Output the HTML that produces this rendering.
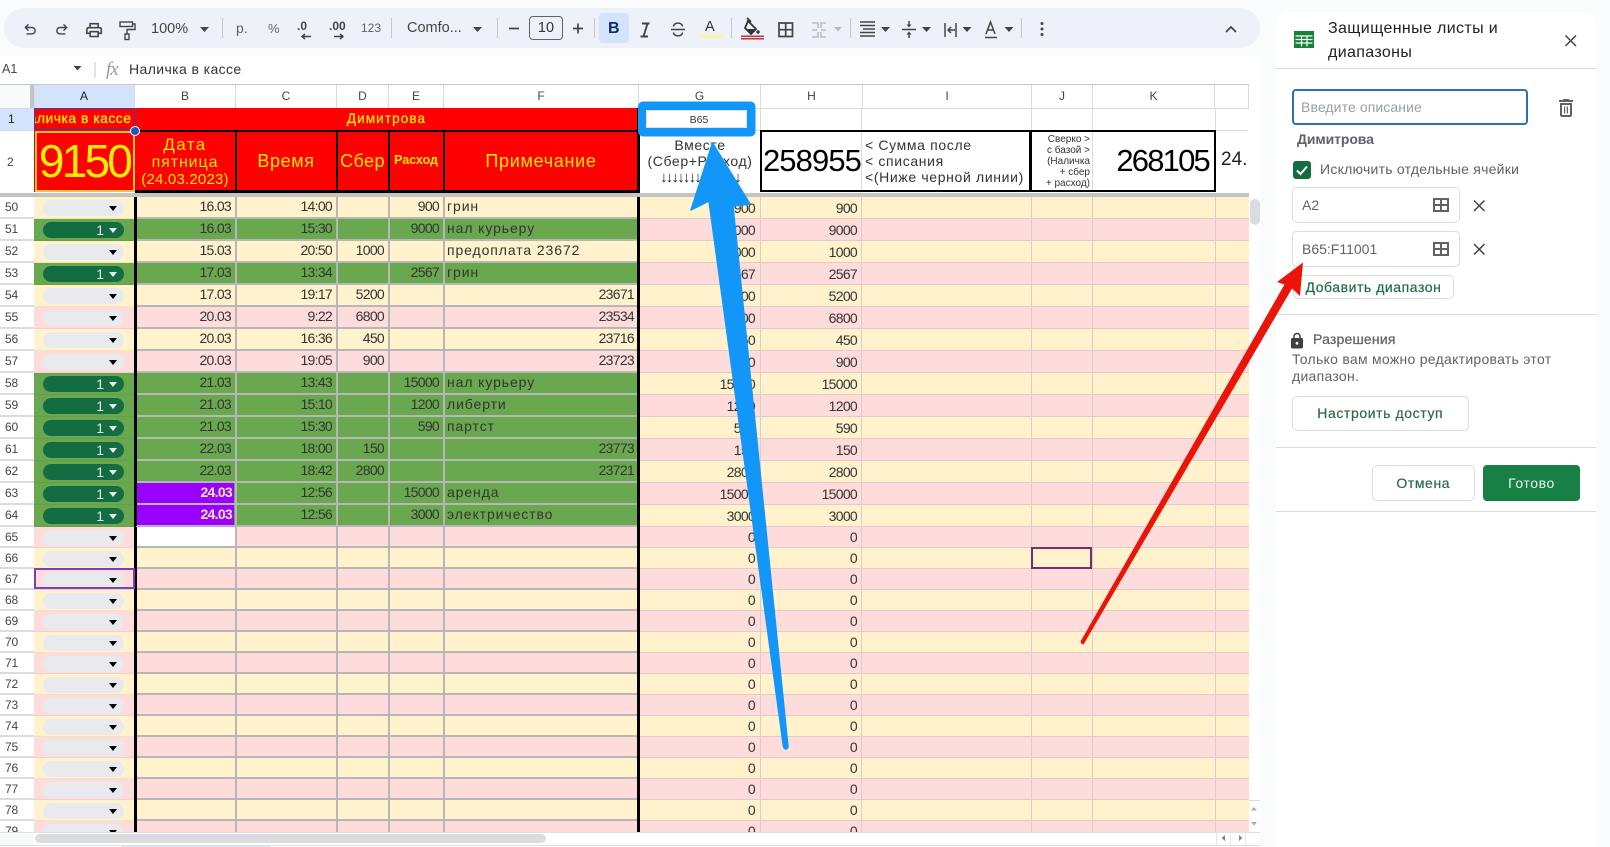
<!DOCTYPE html>
<html lang="ru"><head><meta charset="utf-8"><title>Защищенные листы</title>
<style>
html,body{margin:0;padding:0;width:1610px;height:847px;overflow:hidden;background:#f9fbfd;font-family:"Liberation Sans","DejaVu Sans",sans-serif;color:#333}
.t{position:absolute;white-space:nowrap}
.b{position:absolute}
#grid{position:absolute;left:0;top:197px;width:1248.5px;height:635px;overflow:hidden;background:#fff}
.r{position:relative;display:grid;grid-template-columns:34px 101px 100px 101px 52px 55px 195px 121px 102px;height:21.97px;line-height:19px;font-size:14px;letter-spacing:-.7px;color:#333}
.r.s{height:21px;line-height:19px}
.r>a{display:block;overflow:hidden;text-align:right;padding-right:4px;white-space:nowrap;position:relative;z-index:1}
.r>a:nth-child(1){background:#fff;text-align:left;padding:0 0 0 5px;font-size:12px;line-height:21px;color:#444;letter-spacing:-.2px}
.r.s>a:nth-child(1){line-height:20px}
.r>a:nth-child(n+8){line-height:22px;padding-right:4px}
.r.s>a:nth-child(n+8){line-height:20px}
.r>a.l{text-align:left;padding:0 0 0 4px;letter-spacing:.9px;font-size:14px}
.r>a.v{background:#9900ff;color:#fce5cd;font-weight:bold;margin:0 1px 0 2px;padding-right:2px;height:21px}
.r>a.w{background:#fff;margin:0 0 0 2px;height:20px}
.y{background:#fff2cc}.n{background:#ffdcdc}
.g{background:linear-gradient(90deg,#6aa84f 638px,transparent 638px),#fff2cc}
.g.n{background:linear-gradient(90deg,#6aa84f 638px,transparent 638px),#ffdcdc}
.r::after{content:"";position:absolute;left:0;right:0;bottom:0;height:2px;z-index:2;background:linear-gradient(90deg,#dadce0 34px,transparent 34px,transparent 136px,#b7b7b7 136px,#b7b7b7 637px,transparent 637px)}
.r::before{content:"";position:absolute;left:34px;right:0;bottom:0;height:1px;z-index:2;background:linear-gradient(90deg,rgba(0,0,0,.06) 100px,transparent 100px,transparent 606px,#e3c9c9 606px)}
.p{position:absolute;left:9px;top:3px;width:81px;height:16px;border-radius:8px;background:#e8eaed;display:block;font-style:normal}
.p::after{content:"";position:absolute;right:7px;top:6px;border:4px solid transparent;border-bottom:0;border-top:5px solid #000}
.g .p{background:#146c43;color:#dfeee6;font-size:14px;line-height:16px;text-align:right;padding-right:0}
.g .p span{position:absolute;right:20px;top:0;letter-spacing:0}
.g .p::after{border-top-color:#e6f2ea}
.vl{position:absolute;top:197px;height:635px;z-index:3}
.hc{position:absolute;top:85px;height:23px;line-height:23px;text-align:center;font-size:12px;color:#444;border-right:1px solid #dadce0;box-sizing:border-box}
.gl{position:absolute;background:#e0e0e0}
.bk{position:absolute;background:#000}
.hd{color:#ffe800;text-align:center;position:absolute;white-space:nowrap}
.sb{position:absolute;border:1px solid #dadce0;border-radius:5px;box-sizing:border-box;background:#fff}
</style></head>
<body>
<!-- toolbar -->
<div class="b" style="left:4px;top:8px;width:1256px;height:40px;border-radius:20px;background:#edf2fa"></div>
<div class="b" style="left:0;top:56px;width:1260px;height:791px;background:#fff"></div>
<div class="b" style="left:599px;top:13px;width:30px;height:30px;border-radius:4px;background:#d3e3fd"></div>
<div class="t" style="left:151px;top:21px;font-size:14.5px;color:#444;line-height:17px">100%</div>
<div class="t" style="left:236px;top:20px;font-size:14px;color:#5f6368;line-height:17px">р.</div>
<div class="t" style="left:268px;top:20px;font-size:13px;color:#5f6368;line-height:17px">%</div>
<div class="t" style="left:297px;top:19px;font-size:12px;font-weight:bold;color:#444;line-height:15px">.0</div>
<div class="t" style="left:329px;top:19px;font-size:12px;font-weight:bold;color:#444;line-height:15px">.00</div>
<div class="t" style="left:361px;top:21px;font-size:12px;color:#5f6368;line-height:15px">123</div>
<div class="t" style="left:407px;top:20px;font-size:14.5px;color:#444;line-height:17px">Comfo...</div>
<div class="b" style="left:529px;top:16px;width:34px;height:24px;border:1px solid #5f6368;border-radius:4px;box-sizing:border-box;text-align:center;line-height:22px;font-size:14.5px;color:#333">10</div>
<div class="t" style="left:608px;top:19px;font-size:16px;font-weight:bold;color:#0b2f66;line-height:20px">B</div>
<div class="t" style="left:705px;top:19px;font-size:14.5px;color:#333;line-height:16px">A</div>
<svg class="b" style="left:0;top:0" width="1260" height="56" viewBox="0 0 1260 56" fill="#444">
<g fill="#c7c7c7"><rect x="222" y="18" width="1" height="20"/><rect x="391" y="18" width="1" height="20"/><rect x="497" y="18" width="1" height="20"/><rect x="594" y="18" width="1" height="20"/><rect x="731" y="18" width="1" height="20"/><rect x="850" y="18" width="1" height="20"/><rect x="1021" y="18" width="1" height="20"/></g>
<path transform="translate(21.5 21) scale(.72)" d="M7 19v-2h7.1q1.575 0 2.738-1T18 13.5q0-1.5-1.162-2.5T14.1 10H7.8l2.6 2.6L9 14 4 9l5-5 1.4 1.4L7.8 8h6.3q2.425 0 4.163 1.575T20 13.5q0 2.35-1.738 3.925T14.1 19Z"/>
<path transform="translate(70.5 21) scale(-.72 .72)" d="M7 19v-2h7.1q1.575 0 2.738-1T18 13.5q0-1.5-1.162-2.5T14.1 10H7.8l2.6 2.6L9 14 4 9l5-5 1.4 1.4L7.8 8h6.3q2.425 0 4.163 1.575T20 13.5q0 2.35-1.738 3.925T14.1 19Z"/>
<path transform="translate(84.5 20.5) scale(.8)" d="M19 8h-1V3H6v5H5c-1.66 0-3 1.34-3 3v6h4v4h12v-4h4v-6c0-1.66-1.34-3-3-3zM8 5h8v3H8V5zm8 12v2H8v-4h8v2zm2-2v-2H6v2H4v-4c0-.55.45-1 1-1h14c.55 0 1 .45 1 1v4h-2z"/>
<g fill="none" stroke="#444" stroke-width="1.4"><rect x="120" y="22" width="12.500" height="4.500"/><path d="M132.500 24h2.500v5.500h-8v4.500"/><rect x="125" y="34" width="4" height="5.500"/></g>
<path d="M200 27h9l-4.500 5zM473 27h9l-4.500 5z" fill="#444"/>
<path d="M302 36.500h9M305 34l-3 2.500 3 2.500M334 36.500h9M340 34l3 2.500-3 2.500" fill="none" stroke="#444" stroke-width="1.500"/>
<path d="M509 28.500h10M573 28.500h10M578 23.500v10" stroke="#444" stroke-width="1.700"/>
<path d="M642 23.500h7.500M640.500 36.500h7.500M647.500 23.500l-4 13" stroke="#444" stroke-width="1.900" fill="none"/>
<path d="M671 29.500h14M673.500 26.500c0-4.500 9-4.500 9 0M673.500 32.500c0 4.500 9 4.500 9 0" stroke="#444" stroke-width="1.500" fill="none"/>
<rect x="700" y="35" width="23" height="3" fill="#fff59d"/>
<path d="M748 21l8 8-5 5-6-6zM747 18l4 4" fill="none" stroke="#333" stroke-width="1.800"/><path d="M747 29h9l-4.500 4.500z" fill="#333"/><circle cx="758" cy="32" r="1.700" fill="#333"/>
<rect x="741" y="35.500" width="23" height="1.500" fill="#c5323a"/><rect x="741" y="38" width="23" height="1.500" fill="#c5323a"/>
<path d="M779 23h13.500v13.500H779zM785.700 23v13.500M779 29.700h13.500" fill="none" stroke="#444" stroke-width="1.700"/>
<path d="M812 23h6v5M826 23h-5v5M812 37h6v-5M826 37h-5v-5M812 30h5M826 30h-5" fill="none" stroke="#b9bcc0" stroke-width="1.600"/>
<path d="M834 27h8l-4 4.500z" fill="#bbb"/>
<path d="M860 22h15M860 25.500h15M863 29h12M860 32.500h15M860 36h15" stroke="#444" stroke-width="1.500"/>
<path d="M881 27h9l-4.500 5zM922 27h9l-4.500 5zM962.500 27h9l-4.500 5zM1004.500 27h9l-4.500 5z" fill="#444"/>
<path d="M902 29.500h14M909 21v5M909 38v-5" stroke="#444" stroke-width="1.500"/><path d="M906.500 24.500L909 27.500l2.500-3zM906.500 34.500L909 31.500l2.500 3z" fill="#444"/>
<path d="M945 23v14M956 23v14M948 30h7M951 27l-3 3 3 3" fill="none" stroke="#444" stroke-width="1.500"/>
<path d="M986 34l4.500-12 4.500 12M987.500 30h6M985 37.500h12" fill="none" stroke="#444" stroke-width="1.500"/>
<circle cx="1042" cy="23.500" r="1.500"/><circle cx="1042" cy="29" r="1.500"/><circle cx="1042" cy="34.500" r="1.500"/>
<path d="M1226 32l5-5 5 5" fill="none" stroke="#444" stroke-width="1.700"/>
</svg>
<!-- formula bar -->
<div class="t" style="left:2px;top:62px;font-size:12.500px;color:#444;line-height:15px">A1</div>
<svg class="b" style="left:70px;top:60px" width="60" height="20"><path d="M3.500 6h8l-4 4.500z" fill="#444"/><rect x="24.500" y="2" width="1" height="16" fill="#c7c7c7"/></svg>
<div class="t" style="left:106px;top:59px;font:italic 19px/21px 'Liberation Serif',serif;color:#999;letter-spacing:-1px">fx</div>
<div class="t" style="left:129px;top:61px;font-size:14px;letter-spacing:.4px;color:#333;line-height:17px">Наличка в кассе</div>
<!-- column headers -->
<div class="b" style="left:0;top:84px;width:1248.500px;height:1px;background:#c4c7c5"></div>
<div class="b" style="left:0;top:85px;width:30px;height:23px;background:#f8f9fa"></div>
<div class="b" style="left:30px;top:85px;width:4px;height:23px;background:#c4c4c4"></div>
<div class="hc" style="left:34px;width:101px;background:#d3e3fd;color:#222">A</div>
<div class="hc" style="left:135px;width:101px">B</div>
<div class="hc" style="left:236px;width:101px">C</div>
<div class="hc" style="left:337px;width:52px">D</div>
<div class="hc" style="left:389px;width:55px">E</div>
<div class="hc" style="left:444px;width:195px">F</div>
<div class="hc" style="left:639px;width:122px">G</div>
<div class="hc" style="left:761px;width:102px">H</div>
<div class="hc" style="left:863px;width:169px">I</div>
<div class="hc" style="left:1032px;width:61px">J</div>
<div class="hc" style="left:1093px;width:122px">K</div>
<div class="hc" style="left:1215px;width:34px"></div>
<!-- row headers 1,2 -->
<div class="b" style="left:0;top:108px;width:1248.500px;height:1px;background:#dadce0"></div>
<div class="b" style="left:0;top:109px;width:34px;height:21px;background:#d3e3fd;text-align:left;padding-left:8px;box-sizing:border-box;font-size:12px;line-height:21px;color:#222">1</div>
<div class="b" style="left:0;top:130px;width:34px;height:62px;text-align:left;padding-left:7px;box-sizing:border-box;font-size:12px;line-height:62px;color:#444;border-top:1px solid #dadce0">2</div>
<div class="gl" style="left:34px;top:85px;width:1px;height:107px;background:#dadce0"></div>
<!-- right empties row 1/2 gridlines -->
<div class="gl" style="left:639px;top:130px;width:121px;height:1px;background:#dadce0"></div>
<div class="gl" style="left:760px;top:108px;width:1px;height:84px;background:#dadce0"></div>
<div class="gl" style="left:861px;top:108px;width:1px;height:84px;background:#dadce0"></div>
<div class="gl" style="left:1031px;top:108px;width:1px;height:84px;background:#dadce0"></div>
<div class="gl" style="left:1092px;top:108px;width:1px;height:84px;background:#dadce0"></div>
<div class="gl" style="left:1215px;top:108px;width:1px;height:84px;background:#dadce0"></div>
<div class="gl" style="left:760px;top:130px;width:488px;height:1px;background:#dadce0"></div>
<!-- red header -->
<div class="b" style="left:34px;top:108px;width:605px;height:84px;background:#f00"></div>
<div class="bk" style="left:135px;top:129.500px;width:503px;height:2.500px"></div>
<div class="bk" style="left:135px;top:190px;width:503px;height:2.500px"></div>
<div class="bk" style="left:234.500px;top:130px;width:2.500px;height:62px"></div>
<div class="bk" style="left:335.500px;top:130px;width:2.500px;height:62px"></div>
<div class="bk" style="left:387.500px;top:130px;width:2.500px;height:62px"></div>
<div class="bk" style="left:442.500px;top:130px;width:2.500px;height:62px"></div>
<div class="bk" style="left:637px;top:108px;width:2.500px;height:85px"></div>
<div class="b" style="left:34.500px;top:131px;width:100px;height:61px;box-sizing:border-box;border:2px solid #f6c838"></div>
<div class="b" style="left:34px;top:108px;width:101px;height:22px;overflow:hidden"><div class="hd" style="right:3.500px;top:0;font-size:14px;letter-spacing:.45px;line-height:21px;-webkit-text-stroke:.3px #ffe800">Наличка в кассе</div></div>
<div class="b" style="left:34px;top:108px;width:101px;height:22px;box-sizing:border-box;border:1.500px solid #3d3fb0"></div>
<div class="hd" style="left:135px;top:108px;width:503px;line-height:21px;font-size:13.500px;letter-spacing:1.100px;-webkit-text-stroke:.25px #ffe800">Димитрова</div>
<div class="hd" style="left:34px;top:131px;width:101px;line-height:60px;font-size:46px;letter-spacing:-2.800px;color:#ffee00">9150</div>
<div class="hd" style="left:135px;top:136px;width:100px;line-height:17px;font-size:15px;letter-spacing:.2px"><span style="font-size:17px;letter-spacing:1.400px">Дата</span><br><span style="font-size:16px;letter-spacing:.9px">пятница</span><br>(24.03.2023)</div>
<div class="hd" style="left:236px;top:132px;width:100px;line-height:58px;font-size:18px;letter-spacing:.6px">Время</div>
<div class="hd" style="left:337px;top:132px;width:51px;line-height:58px;font-size:18px;letter-spacing:.4px">Сбер</div>
<div class="hd" style="left:389px;top:132px;width:54px;line-height:56px;font-size:12.500px;font-weight:bold">Расход</div>
<div class="hd" style="left:444px;top:132px;width:194px;line-height:58px;font-size:18px;letter-spacing:.7px">Примечание</div>
<!-- G2.. -->
<div class="t" style="left:640px;top:137px;width:120px;text-align:center;font-size:14px;line-height:16px;letter-spacing:.6px;color:#333">Вместе<br>(Сбер+Расход)<br><span style="letter-spacing:-1.800px;font-size:15px;color:#222">↓↓↓↓↓↓↓↓↓↓↓↓↓↓</span></div>
<div class="b" style="left:760px;top:130px;width:456px;height:62px;box-sizing:border-box;border:2.500px solid #000"></div>
<div class="bk" style="left:1029px;top:130px;width:3px;height:62px"></div>
<div class="t" style="left:762px;top:131px;width:100px;text-align:center;font-size:31px;line-height:60px;letter-spacing:-.9px;color:#000">258955</div>
<div class="t" style="left:865px;top:137px;font-size:14px;line-height:16px;letter-spacing:.65px;color:#333">&lt; Сумма после<br>&lt; списания<br>&lt;(Ниже черной линии)</div>
<div class="t" style="left:1032px;top:134px;width:58px;text-align:right;font-size:10px;line-height:11px;color:#333">Сверко &gt;<br>с базой &gt;<br>(Наличка<br>+ сбер<br>+ расход)</div>
<div class="t" style="left:1100px;top:131px;width:109px;text-align:right;font-size:31px;line-height:60px;letter-spacing:-1.800px;color:#000">268105</div>
<div class="b" style="left:1218px;top:130px;width:30px;height:60px;overflow:hidden;font-size:19px;line-height:60px;color:#222;padding-left:3px;box-sizing:border-box">24.0</div>
<div class="b" style="left:0;top:192.500px;width:1248.500px;height:4.500px;background:#c4c4c4"></div>
<!-- data rows -->
<div id="grid">
<div class="r y"><a>50</a><a><i class="p"></i></a><a>16.03</a><a>14:00</a><a></a><a>900</a><a class="l">грин</a><a>900</a><a>900</a></div>
<div class="r g n"><a>51</a><a><i class="p"><span>1</span></i></a><a>16.03</a><a>15:30</a><a></a><a>9000</a><a class="l">нал курьеру</a><a>9000</a><a>9000</a></div>
<div class="r y"><a>52</a><a><i class="p"></i></a><a>15.03</a><a>20:50</a><a>1000</a><a></a><a class="l">предоплата 23672</a><a>1000</a><a>1000</a></div>
<div class="r g n"><a>53</a><a><i class="p"><span>1</span></i></a><a>17.03</a><a>13:34</a><a></a><a>2567</a><a class="l">грин</a><a>2567</a><a>2567</a></div>
<div class="r y"><a>54</a><a><i class="p"></i></a><a>17.03</a><a>19:17</a><a>5200</a><a></a><a>23671</a><a>5200</a><a>5200</a></div>
<div class="r n"><a>55</a><a><i class="p"></i></a><a>20.03</a><a>9:22</a><a>6800</a><a></a><a>23534</a><a>6800</a><a>6800</a></div>
<div class="r y"><a>56</a><a><i class="p"></i></a><a>20.03</a><a>16:36</a><a>450</a><a></a><a>23716</a><a>450</a><a>450</a></div>
<div class="r n"><a>57</a><a><i class="p"></i></a><a>20.03</a><a>19:05</a><a>900</a><a></a><a>23723</a><a>900</a><a>900</a></div>
<div class="r g"><a>58</a><a><i class="p"><span>1</span></i></a><a>21.03</a><a>13:43</a><a></a><a>15000</a><a class="l">нал курьеру</a><a>15000</a><a>15000</a></div>
<div class="r g n"><a>59</a><a><i class="p"><span>1</span></i></a><a>21.03</a><a>15:10</a><a></a><a>1200</a><a class="l">либерти</a><a>1200</a><a>1200</a></div>
<div class="r g"><a>60</a><a><i class="p"><span>1</span></i></a><a>21.03</a><a>15:30</a><a></a><a>590</a><a class="l">партст</a><a>590</a><a>590</a></div>
<div class="r g n"><a>61</a><a><i class="p"><span>1</span></i></a><a>22.03</a><a>18:00</a><a>150</a><a></a><a>23773</a><a>150</a><a>150</a></div>
<div class="r g"><a>62</a><a><i class="p"><span>1</span></i></a><a>22.03</a><a>18:42</a><a>2800</a><a></a><a>23721</a><a>2800</a><a>2800</a></div>
<div class="r g n"><a>63</a><a><i class="p"><span>1</span></i></a><a class="v">24.03</a><a>12:56</a><a></a><a>15000</a><a class="l">аренда</a><a>15000</a><a>15000</a></div>
<div class="r g"><a>64</a><a><i class="p"><span>1</span></i></a><a class="v">24.03</a><a>12:56</a><a></a><a>3000</a><a class="l">электричество</a><a>3000</a><a>3000</a></div>
<div class="r s n"><a>65</a><a><i class="p"></i></a><a class="w"></a><a></a><a></a><a></a><a></a><a>0</a><a>0</a></div>
<div class="r s y"><a>66</a><a><i class="p"></i></a><a></a><a></a><a></a><a></a><a></a><a>0</a><a>0</a></div>
<div class="r s n"><a>67</a><a><i class="p"></i></a><a></a><a></a><a></a><a></a><a></a><a>0</a><a>0</a></div>
<div class="r s y"><a>68</a><a><i class="p"></i></a><a></a><a></a><a></a><a></a><a></a><a>0</a><a>0</a></div>
<div class="r s n"><a>69</a><a><i class="p"></i></a><a></a><a></a><a></a><a></a><a></a><a>0</a><a>0</a></div>
<div class="r s y"><a>70</a><a><i class="p"></i></a><a></a><a></a><a></a><a></a><a></a><a>0</a><a>0</a></div>
<div class="r s n"><a>71</a><a><i class="p"></i></a><a></a><a></a><a></a><a></a><a></a><a>0</a><a>0</a></div>
<div class="r s y"><a>72</a><a><i class="p"></i></a><a></a><a></a><a></a><a></a><a></a><a>0</a><a>0</a></div>
<div class="r s n"><a>73</a><a><i class="p"></i></a><a></a><a></a><a></a><a></a><a></a><a>0</a><a>0</a></div>
<div class="r s y"><a>74</a><a><i class="p"></i></a><a></a><a></a><a></a><a></a><a></a><a>0</a><a>0</a></div>
<div class="r s n"><a>75</a><a><i class="p"></i></a><a></a><a></a><a></a><a></a><a></a><a>0</a><a>0</a></div>
<div class="r s y"><a>76</a><a><i class="p"></i></a><a></a><a></a><a></a><a></a><a></a><a>0</a><a>0</a></div>
<div class="r s n"><a>77</a><a><i class="p"></i></a><a></a><a></a><a></a><a></a><a></a><a>0</a><a>0</a></div>
<div class="r s y"><a>78</a><a><i class="p"></i></a><a></a><a></a><a></a><a></a><a></a><a>0</a><a>0</a></div>
<div class="r s n"><a>79</a><a><i class="p"></i></a><a></a><a></a><a></a><a></a><a></a><a>0</a><a>0</a></div>
</div>
<!-- vertical gridlines -->
<div class="vl" style="left:235px;width:2px;background:#b7b7b7"></div>
<div class="vl" style="left:336px;width:2px;background:#b7b7b7"></div>
<div class="vl" style="left:388px;width:2px;background:#b7b7b7"></div>
<div class="vl" style="left:443px;width:2px;background:#b7b7b7"></div>
<div class="vl" style="left:760px;width:1px;background:#e3c9c9"></div>
<div class="vl" style="left:861px;width:1px;background:#e3c9c9"></div>
<div class="vl" style="left:1031px;width:1px;background:#e3c9c9"></div>
<div class="vl" style="left:1092px;width:1px;background:#e3c9c9"></div>
<div class="vl" style="left:1215px;width:1px;background:#e3c9c9"></div>
<div class="vl" style="left:133.500px;width:3px;background:#000"></div>
<div class="vl" style="left:637px;width:3px;background:#000"></div>
<div class="b" style="left:136px;top:526px;width:98px;height:1px;background:#c59ae0;z-index:4"></div>
<div class="b" style="left:34px;top:568px;width:100.500px;height:21px;box-sizing:border-box;border:2px solid #7b3fb8;z-index:4"></div>
<div class="b" style="left:1031px;top:547px;width:61px;height:21.500px;box-sizing:border-box;border:2px solid #7b2a6e;z-index:4"></div>
<!-- selection handle -->
<div class="b" style="left:129.500px;top:125.500px;width:10px;height:10px;border-radius:50%;background:#1a56c4;border:1px solid #fff;box-sizing:border-box;z-index:4"></div>
<!-- scrollbars -->
<div class="b" style="left:1250px;top:199px;width:9.500px;height:26px;border-radius:5px;background:#dadce0"></div>
<div class="b" style="left:1248.500px;top:800px;width:11.500px;height:32px;border-top:1px solid #e0e0e0;box-sizing:border-box"></div>
<svg class="b" style="left:1248px;top:800px" width="12" height="34"><path d="M3 10.500l3-3.500 3 3.500zM3 22l3 3.500 3-3.500z" fill="#aaa"/></svg>
<div class="b" style="left:0;top:832px;width:1260px;height:1px;background:#e0e0e0"></div>
<div class="b" style="left:0;top:833px;width:34px;height:12px;background:#f8f9fa"></div>
<div class="b" style="left:35px;top:834px;width:511px;height:9px;border-radius:5px;background:#dadce0"></div>
<svg class="b" style="left:1215px;top:832px" width="45" height="13"><path d="M10 3l-3.500 3 3.500 3zM24 3l3.500 3-3.500 3z" fill="#888"/><path d="M1.500 0v13M15.500 0v13M30.500 0v13" stroke="#e6e6e6"/></svg>
<div class="b" style="left:0;top:845px;width:1260px;height:1px;background:#dadce0"></div>
<div class="b" style="left:122px;top:846px;width:148px;height:1px;background:#dbe7f7"></div>
<!-- sidebar -->
<div class="b" style="left:1276px;top:12px;width:320px;height:835px;background:#fff;border-radius:12px 12px 0 0"></div>
<svg class="b" style="left:1294px;top:31px" width="20" height="17"><rect width="20" height="17" fill="#188038"/><path d="M1.500 5h17M1.500 8.500h17M1.500 12h17M7.500 5v10.500M13 5v10.500" stroke="#fff" stroke-width="1.200"/><rect x="1.500" y="2" width="17" height="1" fill="#188038"/></svg>
<div class="t" style="left:1328px;top:16.500px;font-size:16px;line-height:24px;letter-spacing:.36px;color:#202124">Защищенные листы и<br>диапазоны</div>
<svg class="b" style="left:1563px;top:34px" width="16" height="14"><path d="M2.500 1.500l10.500 10.500M13 1.500L2.500 12" stroke="#444" stroke-width="1.500"/></svg>
<div class="b" style="left:1276px;top:68px;width:320px;height:1px;background:#dadce0"></div>
<div class="b" style="left:1292px;top:89px;width:235.500px;height:35.500px;box-sizing:border-box;border:2px solid #2f6fb5;border-radius:4px"></div>
<div class="t" style="left:1301px;top:99px;font-size:14px;line-height:16px;letter-spacing:.1px;color:#9aa0a6">Введите описание</div>
<svg class="b" style="left:1554px;top:96px" width="24" height="24" viewBox="0 0 24 24" fill="#5f6368"><path d="M6 19c0 1.100.9 2 2 2h8c1.100 0 2-.9 2-2V7H6v12zM8 9h8v10H8V9zm7.500-5l-1-1h-5l-1 1H5v2h14V4z"/><path d="M10 10.500h1.200v7H10zM12.800 10.500H14v7h-1.200z"/></svg>
<div class="t" style="left:1297px;top:131px;font-size:14px;line-height:17px;font-weight:bold;letter-spacing:-.1px;color:#5f6368">Димитрова</div>
<div class="b" style="left:1293px;top:161px;width:18px;height:18px;border-radius:3px;background:#146c43"></div>
<svg class="b" style="left:1293px;top:161px" width="18" height="18"><path d="M4 9.500l3.500 3.500L14 5.500" fill="none" stroke="#fff" stroke-width="2"/></svg>
<div class="t" style="left:1320px;top:161px;font-size:14px;line-height:17px;letter-spacing:.25px;color:#5f6368">Исключить отдельные ячейки</div>
<div class="sb" style="left:1292px;top:187px;width:167.500px;height:35.500px"></div>
<div class="t" style="left:1302px;top:196.500px;font-size:14px;line-height:17px;color:#5f6368">A2</div>
<div class="sb" style="left:1292px;top:231px;width:167.500px;height:35.500px"></div>
<div class="t" style="left:1302px;top:241px;font-size:14px;line-height:17px;color:#5f6368">B65:F11001</div>
<svg class="b" style="left:1432px;top:197px" width="60" height="62" fill="none" stroke="#5f6368" stroke-width="2"><path d="M2 2h14v12H2zM9 2v12M2 8h14M2 46h14v12H2zM9 46v12M2 52h14"/><path d="M42 3.500l10.500 10.500M52.500 3.500L42 14M42 47l10.500 10.500M52.500 47L42 57.500" stroke="#444" stroke-width="1.500"/></svg>
<div class="sb" style="left:1293px;top:275px;width:161px;height:24px;text-align:left;padding-left:11.500px;font-size:14px;line-height:22px;letter-spacing:.55px;color:#1e6b3f;-webkit-text-stroke:.2px #1e6b3f">Добавить диапазон</div>
<div class="b" style="left:1276px;top:314px;width:320px;height:1px;background:#dadce0"></div>
<svg class="b" style="left:1288px;top:332px" width="18" height="18" viewBox="0 0 24 24" fill="#3c4043"><path d="M18 8h-1V6c0-2.760-2.240-5-5-5S7 3.240 7 6v2H6c-1.100 0-2 .9-2 2v10c0 1.100.9 2 2 2h12c1.100 0 2-.9 2-2V10c0-1.100-.9-2-2-2zm-6 9c-1.100 0-2-.9-2-2s.9-2 2-2 2 .9 2 2-.9 2-2 2zM9 8V6c0-1.660 1.340-3 3-3s3 1.340 3 3v2H9z"/></svg>
<div class="t" style="left:1313px;top:331px;font-size:14px;line-height:17px;letter-spacing:.2px;color:#5f6368;-webkit-text-stroke:.25px #5f6368">Разрешения</div>
<div class="t" style="left:1292px;top:351px;font-size:14px;line-height:17px;letter-spacing:.28px;color:#5f6368">Только вам можно редактировать этот<br>диапазон.</div>
<div class="sb" style="left:1292px;top:395.500px;width:176.500px;height:35.500px;text-align:center;line-height:33px;font-size:14px;letter-spacing:.6px;color:#2d6a4a;-webkit-text-stroke:.2px #2d6a4a">Настроить доступ</div>
<div class="b" style="left:1276px;top:446.500px;width:320px;height:1px;background:#dadce0"></div>
<div class="sb" style="left:1372px;top:465px;width:102.500px;height:35.500px;text-align:center;line-height:35px;font-size:14px;letter-spacing:.6px;color:#2d6a4a;-webkit-text-stroke:.2px #2d6a4a">Отмена</div>
<div class="b" style="left:1483px;top:465px;width:97px;height:35.500px;border-radius:4px;background:#188045;text-align:center;line-height:36px;font-size:14px;letter-spacing:.6px;color:#e8f5ec">Готово</div>
<div class="b" style="left:1276px;top:511px;width:320px;height:1px;background:#dadce0"></div>
<!-- annotations -->
<svg class="b" style="left:0;top:0;z-index:6" width="1610" height="847" viewBox="0 0 1610 847">
<path fill-rule="evenodd" fill="#1296f7" d="M643 101.500h107.500a5 5 0 0 1 5 5v25a5 5 0 0 1-5 5H643a5 5 0 0 1-5-5v-25a5 5 0 0 1 5-5zM646.500 110.500v17h100v-17z"/>
<rect x="646.500" y="110.500" width="100" height="17" fill="#fff" stroke="#dfe8d8"/>
<text x="699" y="123" font-size="10.500" text-anchor="middle" fill="#333" font-family="Liberation Sans,sans-serif">B65</text>
<path fill="#1296f7" stroke="#1296f7" stroke-width="1.500" stroke-linejoin="round" d="M712.500 143L750 204L733 206L788 747Q786 751 783.500 747L709 201L691 210Z"/>
<path fill="#ea1408" d="M1303 262.500L1300 296L1292 288.500L1083.500 644.500Q1081 644 1080.500 641.500L1284.500 284.500L1277 282Z"/>
</svg>
</body></html>
